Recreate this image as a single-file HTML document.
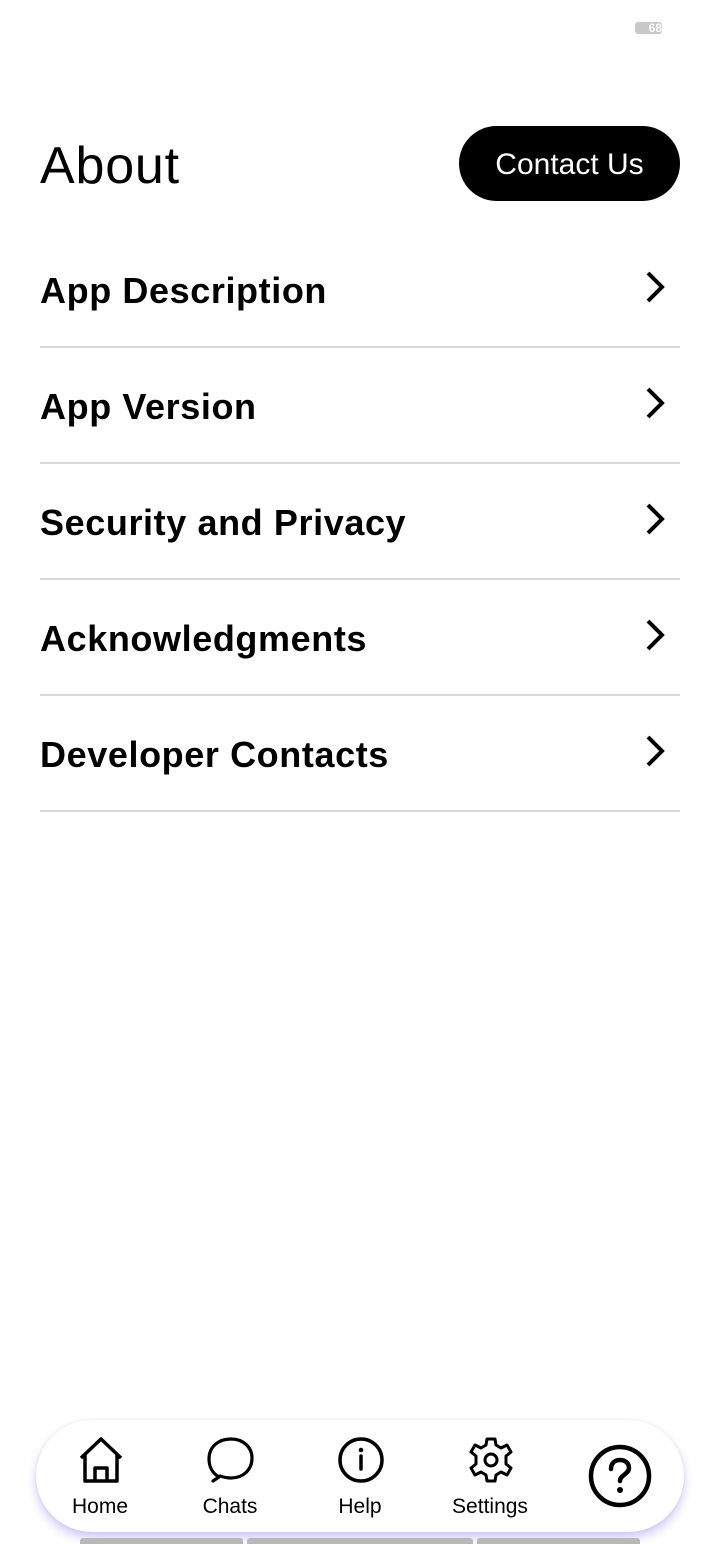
<!DOCTYPE html>
<html><head><meta charset="utf-8"><style>
html,body{margin:0;padding:0;background:#fff;}
body{width:720px;height:1544px;position:relative;overflow:hidden;font-family:"Liberation Sans",sans-serif;color:#000;}
.batt{position:absolute;left:635px;top:22px;width:27px;height:12px;background:#c8c8c8;border-radius:3px;color:#fff;font-size:12px;font-weight:bold;line-height:12px;text-align:right;overflow:hidden;}
h1{position:absolute;left:40px;top:135px;margin:0;font-size:52px;font-weight:normal;line-height:62px;letter-spacing:0.8px;}
.btn{position:absolute;left:459px;top:126px;width:221px;height:75px;background:#000;border-radius:38px;color:#fff;font-size:30px;line-height:77px;text-align:center;}
.row{position:absolute;left:40px;width:640px;height:116px;border-bottom:2px solid #d9d9d9;box-sizing:border-box;}
.row span{position:absolute;left:0;top:36px;font-size:36px;font-weight:bold;line-height:46px;letter-spacing:0.6px;}
.row svg{position:absolute;right:14px;top:37px;}
.nav{position:absolute;left:36px;top:1420px;width:648px;height:112px;background:#fff;border-radius:56px;box-shadow:0 6px 10px rgba(150,140,240,0.45),0 0 3px rgba(150,140,240,0.2);}
.item{position:absolute;top:0;width:120px;text-align:center;}
.item svg{position:absolute;left:37px;top:16px;}
.item div{position:absolute;left:0;width:120px;top:74px;font-size:21px;line-height:26px;}
.bar{position:absolute;top:1538px;height:6px;background:#b8b8b8;border-radius:3px 3px 0 0;}
</style></head><body>
<div class="batt">68</div>
<h1>About</h1>
<div class="btn">Contact Us</div>

<div class="row" style="top:232px"><span>App Description</span><svg width="22" height="36" viewBox="0 0 22 36"><path d="M4 4 L18 18 L4 32" fill="none" stroke="#000" stroke-width="4"/></svg></div>
<div class="row" style="top:348px"><span>App Version</span><svg width="22" height="36" viewBox="0 0 22 36"><path d="M4 4 L18 18 L4 32" fill="none" stroke="#000" stroke-width="4"/></svg></div>
<div class="row" style="top:464px"><span>Security and Privacy</span><svg width="22" height="36" viewBox="0 0 22 36"><path d="M4 4 L18 18 L4 32" fill="none" stroke="#000" stroke-width="4"/></svg></div>
<div class="row" style="top:580px"><span>Acknowledgments</span><svg width="22" height="36" viewBox="0 0 22 36"><path d="M4 4 L18 18 L4 32" fill="none" stroke="#000" stroke-width="4"/></svg></div>
<div class="row" style="top:696px"><span>Developer Contacts</span><svg width="22" height="36" viewBox="0 0 22 36"><path d="M4 4 L18 18 L4 32" fill="none" stroke="#000" stroke-width="4"/></svg></div>

<div class="nav">
 <div class="item" style="left:4px">
  <svg width="48" height="48" viewBox="0 0 48 48"><path d="M4 22 L24 3 L44 22 M8 18 V45 H40 V18 M18 45 V32 H30 V45" fill="none" stroke="#000" stroke-width="3.5" stroke-linejoin="round"/></svg>
  <div>Home</div></div>
 <div class="item" style="left:134px">
  <svg width="48" height="48" viewBox="0 0 48 48"><path d="M12 41 C5 37 2 30 2 23 C2 11 11 3 24 3 C36 3 45 11 45 22 C45 34 36 42 24 42 C20 42 16 41 13 40 L6 45 Z" fill="none" stroke="#000" stroke-width="3.2" stroke-linejoin="round"/></svg>
  <div>Chats</div></div>
 <div class="item" style="left:264px">
  <svg width="48" height="48" viewBox="0 0 48 48"><circle cx="24" cy="24" r="21" fill="none" stroke="#000" stroke-width="3.5"/><circle cx="24" cy="14" r="2.3"/><path d="M24 20 V33" stroke="#000" stroke-width="3.5" stroke-linecap="round"/></svg>
  <div>Help</div></div>
 <div class="item" style="left:394px">
  <svg width="48" height="48" viewBox="0 0 48 48"><path d="M20 3 H28 L29 9 L34 12 L40 9 L44 16 L39 20 V28 L44 32 L40 39 L34 36 L29 39 L28 45 H20 L19 39 L14 36 L8 39 L4 32 L9 28 V20 L4 16 L8 9 L14 12 L19 9 Z" fill="none" stroke="#000" stroke-width="3" stroke-linejoin="round"/><circle cx="24" cy="24" r="6" fill="none" stroke="#000" stroke-width="3"/></svg>
  <div>Settings</div></div>
 <svg style="position:absolute;left:552px;top:24px" width="64" height="64" viewBox="0 0 64 64"><circle cx="32" cy="32" r="29" fill="none" stroke="#000" stroke-width="4.5"/><path d="M23 25 C23 19 27 16 32 16 C37 16 41 19 41 24 C41 30 32 31 32 37" fill="none" stroke="#000" stroke-width="4.5" stroke-linecap="round"/><circle cx="32" cy="46" r="3"/></svg>
</div>
<div class="bar" style="left:80px;width:163px"></div>
<div class="bar" style="left:247px;width:226px"></div>
<div class="bar" style="left:477px;width:163px"></div>
</body></html>
